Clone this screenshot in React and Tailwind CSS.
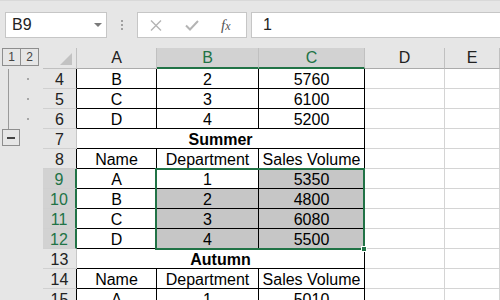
import React from 'react';

const GREEN = '#217346';

const rows = [
  { n: 4, cells: ['B', '2', '5760'], outline: 'dot' },
  { n: 5, cells: ['C', '3', '6100'], outline: 'dot' },
  { n: 6, cells: ['D', '4', '5200'], outline: 'dot' },
  { n: 7, title: 'Summer', outline: 'minus' },
  { n: 8, cells: ['Name', 'Department', 'Sales Volume'] },
  { n: 9, cells: ['A', '1', '5350'], sel: true, active: true },
  { n: 10, cells: ['B', '2', '4800'], sel: true },
  { n: 11, cells: ['C', '3', '6080'], sel: true },
  { n: 12, cells: ['D', '4', '5500'], sel: true },
  { n: 13, title: 'Autumn' },
  { n: 14, cells: ['Name', 'Department', 'Sales Volume'] },
  { n: 15, cells: ['A', '1', '5010'] },
];

function Gutter({ kind }) {
  if (kind === 'dot') {
    return (
      <div className="flex h-[20px] bg-[#e6e6e6]">
        <div className="ml-[8px] w-px bg-[#9a9a9a]" />
        <div className="ml-[18px] mt-[9px] h-[2px] w-[2px] bg-[#a6a6a6]" />
      </div>
    );
  }
  if (kind === 'minus') {
    return (
      <div className="h-[20px] bg-[#e6e6e6]">
        <div className="ml-[2px] flex h-[17px] w-[18px] items-center justify-center border border-[#8e8e8e]">
          <div className="h-[2px] w-[8px] bg-[#444]" />
        </div>
      </div>
    );
  }
  return <div className="h-[20px] bg-[#e6e6e6]" />;
}

function RowHeader({ row }) {
  const border = row.sel
    ? 'border-r-2 border-r-[#217346] bg-[#d2d2d2] text-[#217346]'
    : row.title
      ? 'border-r border-r-[#c6c6c6] bg-[#e6e6e6] text-[#222]'
      : 'border-r border-r-black bg-[#e6e6e6] text-[#222]';
  return (
    <div className={`flex h-[20px] items-end justify-center border-b border-b-[#d0d0d0] text-[16px] leading-[16px] ${border}`}>
      {row.n}
    </div>
  );
}

function Cell({ children, fill, bold, span }) {
  return (
    <div
      className={`flex h-[20px] items-end justify-center whitespace-nowrap border-b border-r border-black text-[16px] leading-[16px] text-black ${fill ? 'bg-[#c6c6c6]' : 'bg-white'} ${bold ? 'font-bold' : ''} ${span ? 'col-span-3' : ''}`}
    >
      {children}
    </div>
  );
}

function Blank() {
  return <div className="h-[20px] border-b border-r border-[#d4d4d4] bg-white" />;
}

function ColHeader({ label, sel }) {
  return (
    <div
      className={`flex h-[21px] items-center justify-center border-r border-r-[#c0c0c0] text-[16px] leading-[20px] ${
        sel ? 'border-b-2 border-b-[#217346] bg-[#d2d2d2] text-[#217346]' : 'border-b border-b-[#ababab] bg-[#e6e6e6] text-[#222]'
      }`}
    >
      {label}
    </div>
  );
}

export default function App() {
  return (
    <div className="h-[300px] w-[500px] overflow-hidden bg-white font-['Liberation_Sans',Arial,sans-serif]">
      {/* Formula bar */}
      <div className="flex h-[48px] items-start border-t border-t-[#d9d9d9] bg-[#e6e6e6] pt-[11px]">
        <div className="ml-[5px] flex h-[26px] w-[102px] items-center border border-[#c6c6c6] bg-white pl-[6px] text-[16px] text-[#222]">
          <span className="flex-1">B9</span>
          <svg width="8" height="4" viewBox="0 0 8 4" className="mr-[4px]">
            <path d="M0 0 L8 0 L4 4 Z" fill="#7a7a7a" />
          </svg>
        </div>
        <div className="flex h-[26px] w-[30px] flex-col items-center justify-center gap-[2px]">
          <div className="h-[2px] w-[2px] bg-[#a0a0a0]" />
          <div className="h-[2px] w-[2px] bg-[#a0a0a0]" />
          <div className="h-[2px] w-[2px] bg-[#a0a0a0]" />
        </div>
        <div className="flex h-[26px] w-[110px] items-center border border-[#c6c6c6] bg-white">
          <svg width="12" height="11" viewBox="0 0 12 11" className="ml-[12px]">
            <path d="M1 0.5 L11 10.5 M11 0.5 L1 10.5" stroke="#b4b4b4" strokeWidth="1.4" />
          </svg>
          <svg width="14" height="11" viewBox="0 0 14 11" className="ml-[23px]">
            <path d="M1 5.5 L5 9.5 L13 1" stroke="#b4b4b4" strokeWidth="2" fill="none" />
          </svg>
          <span className="ml-[22px] font-['Liberation_Serif',serif] text-[15px] italic leading-none text-[#555]">
            f<span className="text-[12px]">x</span>
          </span>
        </div>
        <div className="ml-[4px] -mr-[2px] flex h-[26px] flex-1 items-center border border-[#c6c6c6] bg-white pl-[11px] text-[16px] text-[#222]">
          1
        </div>
      </div>

      {/* Sheet */}
      <div className="relative grid grid-cols-[43px_34px_80px_102px_106px_80px_55px]">
        {/* Header row */}
        <div className="flex h-[21px] bg-[#e6e6e6] pl-[2px] text-[12px] text-[#444]">
          <div className="flex h-[18px] w-[19px] items-center justify-center border border-[#8e8e8e]">1</div>
          <div className="-ml-px flex h-[18px] w-[19px] items-center justify-center border border-[#8e8e8e]">2</div>
        </div>
        <div className="flex h-[21px] items-end justify-end border-b border-r border-[#c0c0c0] bg-[#e6e6e6] pb-[3px] pr-[4px]">
          <svg width="12" height="12" viewBox="0 0 12 12">
            <path d="M12 0 L12 12 L0 12 Z" fill="#c2c2c2" />
          </svg>
        </div>
        <ColHeader label="A" />
        <ColHeader label="B" sel />
        <ColHeader label="C" sel />
        <ColHeader label="D" />
        <ColHeader label="E" />

        {rows.map((row) => (
          <React.Fragment key={row.n}>
            <Gutter kind={row.outline} />
            <RowHeader row={row} />
            {row.title ? (
              <Cell span bold>{row.title}</Cell>
            ) : (
              <>
                <Cell>{row.cells[0]}</Cell>
                <Cell fill={row.sel && !row.active}>{row.cells[1]}</Cell>
                <Cell fill={row.sel}>{row.cells[2]}</Cell>
              </>
            )}
            <Blank />
            <Blank />
          </React.Fragment>
        ))}

        {/* Selection outline */}
        <div className="pointer-events-none absolute left-[155px] top-[120px] h-[82px] w-[210px] border-2 border-[#217346]" />
        <div className="absolute left-[361px] top-[198px] h-[6px] w-[6px] border border-white bg-[#217346]" />
      </div>
    </div>
  );
}
